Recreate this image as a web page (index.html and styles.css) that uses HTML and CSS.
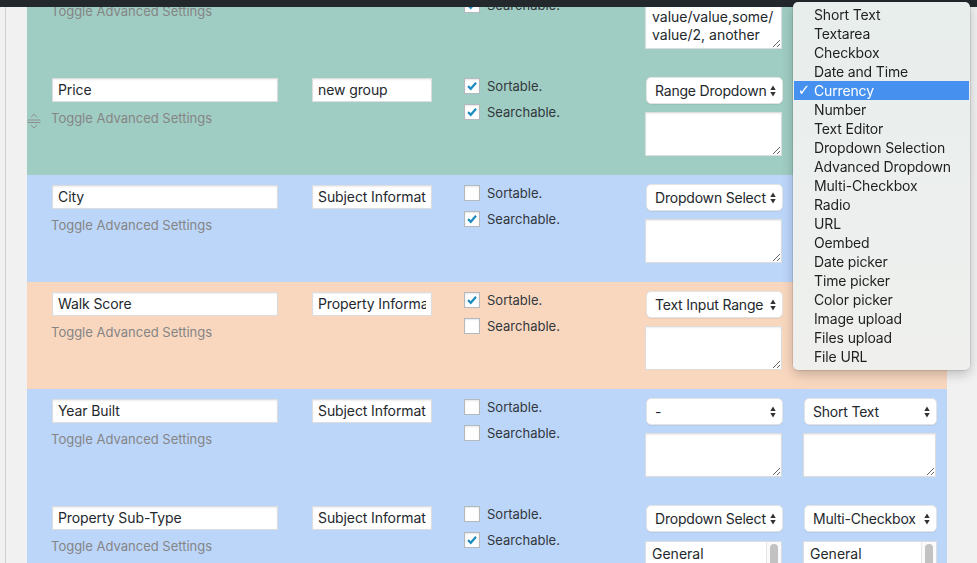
FILE: index.html
```html
<!DOCTYPE html>
<html>
<head>
<meta charset="utf-8">
<title>Fields</title>
<link rel="stylesheet" href="styles.css">
</head>
<body>
<div class="adminbar"></div>
<div class="layout">
  <div class="gutter"></div>
  <div class="fields">

    <div class="row teal">
      <div class="c-name">
        <input class="txt" type="text" value="Property Type">
        <div class="toggle">Toggle Advanced Settings</div>
      </div>
      <div class="c-group"><input class="txt" type="text" value="new group"></div>
      <div class="c-flags">
        <div class="flag"><span class="cb"><svg viewBox="0 0 16 16"><path d="M3.5 8.2 L6.6 11.2 L12.6 4.4"/></svg></span>Sortable.</div>
        <div class="flag"><span class="cb"><svg viewBox="0 0 16 16"><path d="M3.5 8.2 L6.6 11.2 L12.6 4.4"/></svg></span>Searchable.</div>
      </div>
      <div class="c-type">
        <div class="sel"><span class="sel-text">Dropdown Select</span><svg class="arrows" viewBox="0 0 6 12"><path d="M0.3 5 L3 0.6 L5.7 5 Z M0.3 7 L5.7 7 L3 11.4 Z"/></svg></div>
        <textarea class="ta">value/value,some/ value/2, another</textarea>
      </div>
      <div class="c-kind">
        <div class="sel"><span class="sel-text">Dropdown Select</span><svg class="arrows" viewBox="0 0 6 12"><path d="M0.3 5 L3 0.6 L5.7 5 Z M0.3 7 L5.7 7 L3 11.4 Z"/></svg></div>
        <textarea class="ta"></textarea>
      </div>
    </div>

    <div class="row teal">
      <span class="handle"><svg viewBox="0 0 14 16"><path d="M4 4.2 L7 1.2 L10 4.2 M0.5 7 H13.5 M0.5 9.5 H13.5 M4 12 L7 15 L10 12"/></svg></span>
      <div class="c-name">
        <input class="txt" type="text" value="Price">
        <div class="toggle">Toggle Advanced Settings</div>
      </div>
      <div class="c-group"><input class="txt" type="text" value="new group"></div>
      <div class="c-flags">
        <div class="flag"><span class="cb"><svg viewBox="0 0 16 16"><path d="M3.5 8.2 L6.6 11.2 L12.6 4.4"/></svg></span>Sortable.</div>
        <div class="flag"><span class="cb"><svg viewBox="0 0 16 16"><path d="M3.5 8.2 L6.6 11.2 L12.6 4.4"/></svg></span>Searchable.</div>
      </div>
      <div class="c-type">
        <div class="sel"><span class="sel-text">Range Dropdown</span><svg class="arrows" viewBox="0 0 6 12"><path d="M0.3 5 L3 0.6 L5.7 5 Z M0.3 7 L5.7 7 L3 11.4 Z"/></svg></div>
        <textarea class="ta"></textarea>
      </div>
      <div class="c-kind">
        <div class="sel"><span class="sel-text">Currency</span><svg class="arrows" viewBox="0 0 6 12"><path d="M0.3 5 L3 0.6 L5.7 5 Z M0.3 7 L5.7 7 L3 11.4 Z"/></svg></div>
        <textarea class="ta"></textarea>
      </div>
    </div>

    <div class="row blue">
      <div class="c-name">
        <input class="txt" type="text" value="City">
        <div class="toggle">Toggle Advanced Settings</div>
      </div>
      <div class="c-group"><input class="txt" type="text" value="Subject Information"></div>
      <div class="c-flags">
        <div class="flag"><span class="cb"></span>Sortable.</div>
        <div class="flag"><span class="cb"><svg viewBox="0 0 16 16"><path d="M3.5 8.2 L6.6 11.2 L12.6 4.4"/></svg></span>Searchable.</div>
      </div>
      <div class="c-type">
        <div class="sel"><span class="sel-text">Dropdown Select</span><svg class="arrows" viewBox="0 0 6 12"><path d="M0.3 5 L3 0.6 L5.7 5 Z M0.3 7 L5.7 7 L3 11.4 Z"/></svg></div>
        <textarea class="ta"></textarea>
      </div>
      <div class="c-kind">
        <div class="sel"><span class="sel-text">Short Text</span><svg class="arrows" viewBox="0 0 6 12"><path d="M0.3 5 L3 0.6 L5.7 5 Z M0.3 7 L5.7 7 L3 11.4 Z"/></svg></div>
        <textarea class="ta"></textarea>
      </div>
    </div>

    <div class="row peach">
      <div class="c-name">
        <input class="txt" type="text" value="Walk Score">
        <div class="toggle">Toggle Advanced Settings</div>
      </div>
      <div class="c-group"><input class="txt" type="text" value="Property Information"></div>
      <div class="c-flags">
        <div class="flag"><span class="cb"><svg viewBox="0 0 16 16"><path d="M3.5 8.2 L6.6 11.2 L12.6 4.4"/></svg></span>Sortable.</div>
        <div class="flag"><span class="cb"></span>Searchable.</div>
      </div>
      <div class="c-type">
        <div class="sel"><span class="sel-text">Text Input Range</span><svg class="arrows" viewBox="0 0 6 12"><path d="M0.3 5 L3 0.6 L5.7 5 Z M0.3 7 L5.7 7 L3 11.4 Z"/></svg></div>
        <textarea class="ta"></textarea>
      </div>
      <div class="c-kind">
        <div class="sel"><span class="sel-text">Number</span><svg class="arrows" viewBox="0 0 6 12"><path d="M0.3 5 L3 0.6 L5.7 5 Z M0.3 7 L5.7 7 L3 11.4 Z"/></svg></div>
        <textarea class="ta"></textarea>
      </div>
    </div>

    <div class="row blue">
      <div class="c-name">
        <input class="txt" type="text" value="Year Built">
        <div class="toggle">Toggle Advanced Settings</div>
      </div>
      <div class="c-group"><input class="txt" type="text" value="Subject Information"></div>
      <div class="c-flags">
        <div class="flag"><span class="cb"></span>Sortable.</div>
        <div class="flag"><span class="cb"></span>Searchable.</div>
      </div>
      <div class="c-type">
        <div class="sel"><span class="sel-text">-</span><svg class="arrows" viewBox="0 0 6 12"><path d="M0.3 5 L3 0.6 L5.7 5 Z M0.3 7 L5.7 7 L3 11.4 Z"/></svg></div>
        <textarea class="ta"></textarea>
      </div>
      <div class="c-kind">
        <div class="sel"><span class="sel-text">Short Text</span><svg class="arrows" viewBox="0 0 6 12"><path d="M0.3 5 L3 0.6 L5.7 5 Z M0.3 7 L5.7 7 L3 11.4 Z"/></svg></div>
        <textarea class="ta"></textarea>
      </div>
    </div>

    <div class="row blue">
      <div class="c-name">
        <input class="txt" type="text" value="Property Sub-Type">
        <div class="toggle">Toggle Advanced Settings</div>
      </div>
      <div class="c-group"><input class="txt" type="text" value="Subject Information"></div>
      <div class="c-flags">
        <div class="flag"><span class="cb"></span>Sortable.</div>
        <div class="flag"><span class="cb"><svg viewBox="0 0 16 16"><path d="M3.5 8.2 L6.6 11.2 L12.6 4.4"/></svg></span>Searchable.</div>
      </div>
      <div class="c-type">
        <div class="sel"><span class="sel-text">Dropdown Select</span><svg class="arrows" viewBox="0 0 6 12"><path d="M0.3 5 L3 0.6 L5.7 5 Z M0.3 7 L5.7 7 L3 11.4 Z"/></svg></div>
        <div class="listbox"><div class="lb-items"><div class="lb-item">General</div></div><div class="lb-bar"><span class="lb-thumb"></span></div></div>
      </div>
      <div class="c-kind">
        <div class="sel"><span class="sel-text">Multi-Checkbox</span><svg class="arrows" viewBox="0 0 6 12"><path d="M0.3 5 L3 0.6 L5.7 5 Z M0.3 7 L5.7 7 L3 11.4 Z"/></svg></div>
        <div class="listbox"><div class="lb-items"><div class="lb-item">General</div></div><div class="lb-bar"><span class="lb-thumb"></span></div></div>
      </div>
    </div>

  </div>
</div>

<div class="popup">
  <div class="opt"><span class="mark"></span>Short Text</div>
  <div class="opt"><span class="mark"></span>Textarea</div>
  <div class="opt"><span class="mark"></span>Checkbox</div>
  <div class="opt"><span class="mark"></span>Date and Time</div>
  <div class="opt current"><span class="mark">✓</span>Currency</div>
  <div class="opt"><span class="mark"></span>Number</div>
  <div class="opt"><span class="mark"></span>Text Editor</div>
  <div class="opt"><span class="mark"></span>Dropdown Selection</div>
  <div class="opt"><span class="mark"></span>Advanced Dropdown</div>
  <div class="opt"><span class="mark"></span>Multi-Checkbox</div>
  <div class="opt"><span class="mark"></span>Radio</div>
  <div class="opt"><span class="mark"></span>URL</div>
  <div class="opt"><span class="mark"></span>Oembed</div>
  <div class="opt"><span class="mark"></span>Date picker</div>
  <div class="opt"><span class="mark"></span>Time picker</div>
  <div class="opt"><span class="mark"></span>Color picker</div>
  <div class="opt"><span class="mark"></span>Image upload</div>
  <div class="opt"><span class="mark"></span>Files upload</div>
  <div class="opt"><span class="mark"></span>File URL</div>
</div>
</body>
</html>
```

FILE: styles.css
```css
html, body {
  margin: 0;
  padding: 0;
  overflow: hidden;
  height: 100%;
}
body {
  background: #f1f1f1;
  font-family: Inter, "Liberation Sans", Arial, sans-serif;
  color: #2a2e33;
}
.adminbar {
  position: fixed;
  top: 0;
  left: 0;
  right: 0;
  height: 7px;
  background: #23282d;
  z-index: 5;
}
.layout {
  display: flex;
  align-items: flex-start;
}
.gutter {
  flex: none;
  width: 21px;
  margin-left: 5px;
  border-left: 1px solid #d0d0d0;
  align-self: stretch;
  min-height: 600px;
  background: #f1f1f1;
}
.fields {
  flex: none;
  width: 920px;
  margin-top: -39px;
}
.row {
  position: relative;
  display: flex;
  height: 107px;
  box-sizing: border-box;
  padding: 10px 0 0 25px;
}
.teal { background: #a0cdc3; }
.blue { background: #bcd6fa; }
.peach { background: #f9d7bf; }

.c-name { flex: none; width: 226px; margin-right: 34px; }
.c-group { flex: none; width: 120px; margin-right: 32px; }
.c-flags { flex: none; width: 181px; }
.c-type { flex: none; width: 138px; margin-right: 20px; }
.c-kind { flex: none; width: 134px; }

.txt {
  display: block;
  width: 100%;
  height: 24px;
  box-sizing: border-box;
  margin: 0;
  padding: 0 5px 1px;
  border: 1px solid #ddd;
  border-radius: 0;
  background: #fff;
  box-shadow: inset 0 1px 2px rgba(0,0,0,.07);
  font-family: Inter, "Liberation Sans", Arial, sans-serif;
  font-size: 14px;
  letter-spacing: -0.1px;
  color: #23282d;
  outline: none;
}
.toggle {
  margin-top: 8px;
  margin-left: -1px;
  font-size: 13px;
  line-height: 17px;
  color: #858585;
  white-space: nowrap;
}
.flag {
  display: flex;
  align-items: center;
  height: 16px;
  margin-bottom: 10px;
  font-size: 13px;
  color: #32373c;
  white-space: nowrap;
}
.cb {
  flex: none;
  width: 16px;
  height: 16px;
  box-sizing: border-box;
  margin-right: 7px;
  border: 1px solid #b4b9be;
  background: #fff;
  box-shadow: inset 0 1px 2px rgba(0,0,0,.1);
  display: flex;
}
.cb svg {
  width: 14px;
  height: 14px;
  fill: none;
  stroke: #1e8cbe;
  stroke-width: 2.6;
}
.sel {
  display: flex;
  align-items: center;
  justify-content: space-between;
  height: 27px;
  box-sizing: border-box;
  margin-top: -1px;
  margin-left: 1px;
  padding: 0 6px 0 8px;
  background: #fff;
  border: 1px solid #e3e3e3;
  border-radius: 5px;
  box-shadow: 0 1px 1px rgba(0,0,0,.06);
  font-size: 14px;
  letter-spacing: -0.2px;
  color: #23282d;
}
.c-type .sel { width: 137px; }
.c-kind .sel { width: 133px; }
.sel-text {
  overflow: hidden;
  white-space: nowrap;
  flex: 1;
  min-width: 0;
}
.arrows {
  flex: none;
  width: 6px;
  height: 12px;
  margin-left: 2px;
  fill: #333;
}
.ta {
  display: block;
  width: 137px;
  height: 44px;
  box-sizing: border-box;
  margin: 8px 0 0 0;
  padding: 2px 5px 2px 6px;
  border: 1px solid #ddd;
  border-radius: 0;
  background: #fff;
  box-shadow: inset 0 1px 2px rgba(0,0,0,.07);
  font-family: Inter, "Liberation Sans", Arial, sans-serif;
  font-size: 14px;
  line-height: 18px;
  color: #23282d;
  overflow: hidden;
  outline: none;
}
.c-kind .ta { width: 133px; }
.listbox {
  display: flex;
  width: 137px;
  height: 60px;
  box-sizing: border-box;
  margin-top: 9px;
  border: 1px solid #ddd;
  background: #fff;
  font-size: 14px;
  color: #23282d;
}
.c-kind .listbox { width: 134px; }
.lb-items { flex: 1; }
.lb-item {
  padding: 3px 6px;
  line-height: 18px;
}
.lb-bar {
  flex: none;
  width: 14px;
  border-left: 1px solid #e6e6e6;
  background: #fafafa;
  display: flex;
  justify-content: center;
  padding-top: 2px;
}
.lb-thumb {
  width: 8px;
  height: 40px;
  border-radius: 4px;
  background: #c2c2c2;
}
.handle {
  position: absolute;
  left: 0;
  top: 45px;
  width: 14px;
  height: 16px;
}
.handle svg {
  width: 14px;
  height: 16px;
  fill: none;
  stroke: #8e8e8e;
  stroke-width: 1;
}
.popup {
  position: absolute;
  top: 2px;
  left: 793px;
  width: 177px;
  height: 368px;
  box-sizing: border-box;
  padding: 3px 1px 2px;
  background: linear-gradient(#e8eeec, #eff0ee);
  border-radius: 5px;
  box-shadow: 0 0 0 0.5px rgba(0,0,0,.18), 0 4px 12px rgba(0,0,0,.22);
  z-index: 10;
  font-family: Inter, "Liberation Sans", Arial, sans-serif;
  font-size: 14px;
  letter-spacing: -0.15px;
  color: #1f1f1f;
}
.opt {
  display: flex;
  height: 19px;
  line-height: 19px;
  white-space: nowrap;
}
.mark {
  flex: none;
  width: 20px;
  text-align: center;
  font-family: "DejaVu Sans", sans-serif;
  font-size: 15px;
  font-weight: bold;
}
.current {
  background: #4690f0;
  color: #fff;
}
```
